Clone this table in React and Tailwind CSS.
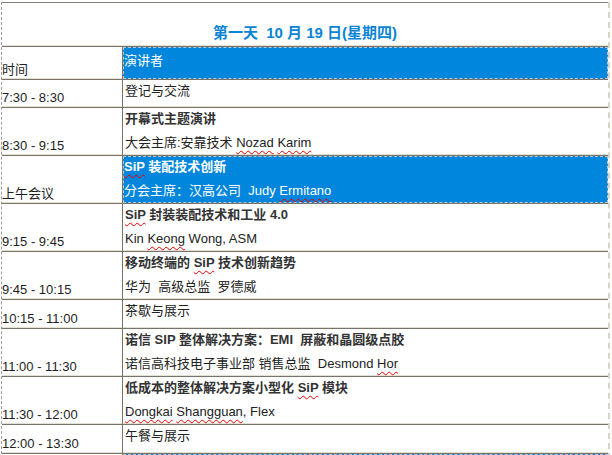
import React from "react";

const Sp = ({ children }) => (
  <span className="underline decoration-wavy decoration-[#e80000] decoration-1 underline-offset-[3px]">
    {children}
  </span>
);

const rows = [
  { time: "7:30 - 8:30", h: "h-[28px]", lines: [{ b: false, c: ["登记与交流"] }] },
  {
    time: "8:30 - 9:15",
    h: "h-[48px]",
    lines: [
      { b: true, c: ["开幕式主题演讲"] },
      { b: false, c: ["大会主席:安靠技术 ", <Sp key="a">Nozad</Sp>, " ", <Sp key="b">Karim</Sp>] },
    ],
  },
  {
    time: "上午会议",
    h: "h-[48px]",
    blue: true,
    lines: [
      { b: true, c: [<Sp key="a">SiP</Sp>, " 装配技术创新"] },
      { b: false, c: ["分会主席：汉高公司  Judy ", <Sp key="b">Ermitano</Sp>] },
    ],
  },
  {
    time: "9:15 - 9:45",
    h: "h-[48px]",
    lines: [
      { b: true, c: [<Sp key="a">SiP</Sp>, " 封装装配技术和工业 4.0"] },
      { b: false, c: ["Kin ", <Sp key="b">Keong</Sp>, " Wong, ASM"] },
    ],
  },
  {
    time: "9:45 - 10:15",
    h: "h-[48px]",
    lines: [
      { b: true, c: ["移动终端的 ", <Sp key="a">SiP</Sp>, " 技术创新趋势"] },
      { b: false, c: ["华为  高级总监  罗德威"] },
    ],
  },
  { time: "10:15 - 11:00", h: "h-[29px]", lines: [{ b: false, c: ["茶歇与展示"] }] },
  {
    time: "11:00 - 11:30",
    h: "h-[48px]",
    lines: [
      { b: true, c: ["诺信 SIP 整体解决方案：EMI  屏蔽和晶圆级点胶"] },
      { b: false, c: ["诺信高科技电子事业部 销售总监  Desmond ", <Sp key="b">Hor</Sp>] },
    ],
  },
  {
    time: "11:30 - 12:00",
    h: "h-[48px]",
    lines: [
      { b: true, c: ["低成本的整体解决方案小型化 ", <Sp key="a">SiP</Sp>, " 模块"] },
      { b: false, c: [<Sp key="a">Dongkai</Sp>, " ", <Sp key="b">Shangguan</Sp>, ", Flex"] },
    ],
  },
  { time: "12:00 - 13:30", h: "h-[29px]", lines: [{ b: false, c: ["午餐与展示"] }] },
  { time: "", h: "h-[6px]", blue: true, lines: [] },
];

function Row({ r }) {
  return (
    <div className={`flex ${r.h} shadow-[inset_0_1px_0_#77736a,0_-1px_0_#e4e0d2]`}>
      <div className="w-[121px] shrink-0 border-r border-[#77736a] flex items-end pb-[1px] leading-[16px] text-[#1e1e1e]">
        {r.time}
      </div>
      <div
        className={
          r.blue
            ? "flex-1 bg-[#0086dd] text-white pl-[1px] mt-[1px] outline-1 outline-dashed outline-[#c4c4c4] -outline-offset-1 leading-[24px]"
            : "flex-1 pl-[2px] leading-[24px] text-[#222222]"
        }
      >
        {r.lines.map((l, i) => (
          <div
            key={i}
            className={`whitespace-pre ${l.b ? "font-bold" : ""} ${
              r.blue && i === 0 ? "-mt-[1px]" : ""
            } ${l.b && !r.blue ? "text-[#333333]" : ""}`}
          >
            {l.c}
          </div>
        ))}
      </div>
    </div>
  );
}

export default function App() {
  return (
    <div className="w-[612px] h-[455px] overflow-hidden bg-white font-['Liberation_Sans','Noto_Sans_CJK_SC',sans-serif] text-[13px]">
      <div className="pt-[2px] pl-[1px]">
        <div className="w-[609px] border-l border-dashed border-[#9c9c9c] border-r-2 border-r-[#d9d5c6]">
          <div className="h-[44px] border-t border-[#85827a] flex items-end justify-center pb-[3px]">
            <span className="text-[15px] font-bold text-[#0a84d6] whitespace-pre leading-[20px]">
              第一天  10 月 19 日(星期四)
            </span>
          </div>
          <div className="flex h-[33px] shadow-[inset_0_1px_0_#77736a,0_-1px_0_#e4e0d2]">
            <div className="w-[121px] shrink-0 border-r border-[#77736a] flex items-end pb-[1px] leading-[16px] text-[#1e1e1e]">
              时间
            </div>
            <div className="flex-1 mt-[1px] bg-[#0086dd] text-white pl-[1px] pt-[2px] leading-[24px] outline-1 outline-dashed outline-[#c4c4c4] -outline-offset-1">
              演讲者
            </div>
          </div>
          {rows.map((r, i) => (
            <Row key={i} r={r} />
          ))}
        </div>
      </div>
    </div>
  );
}
